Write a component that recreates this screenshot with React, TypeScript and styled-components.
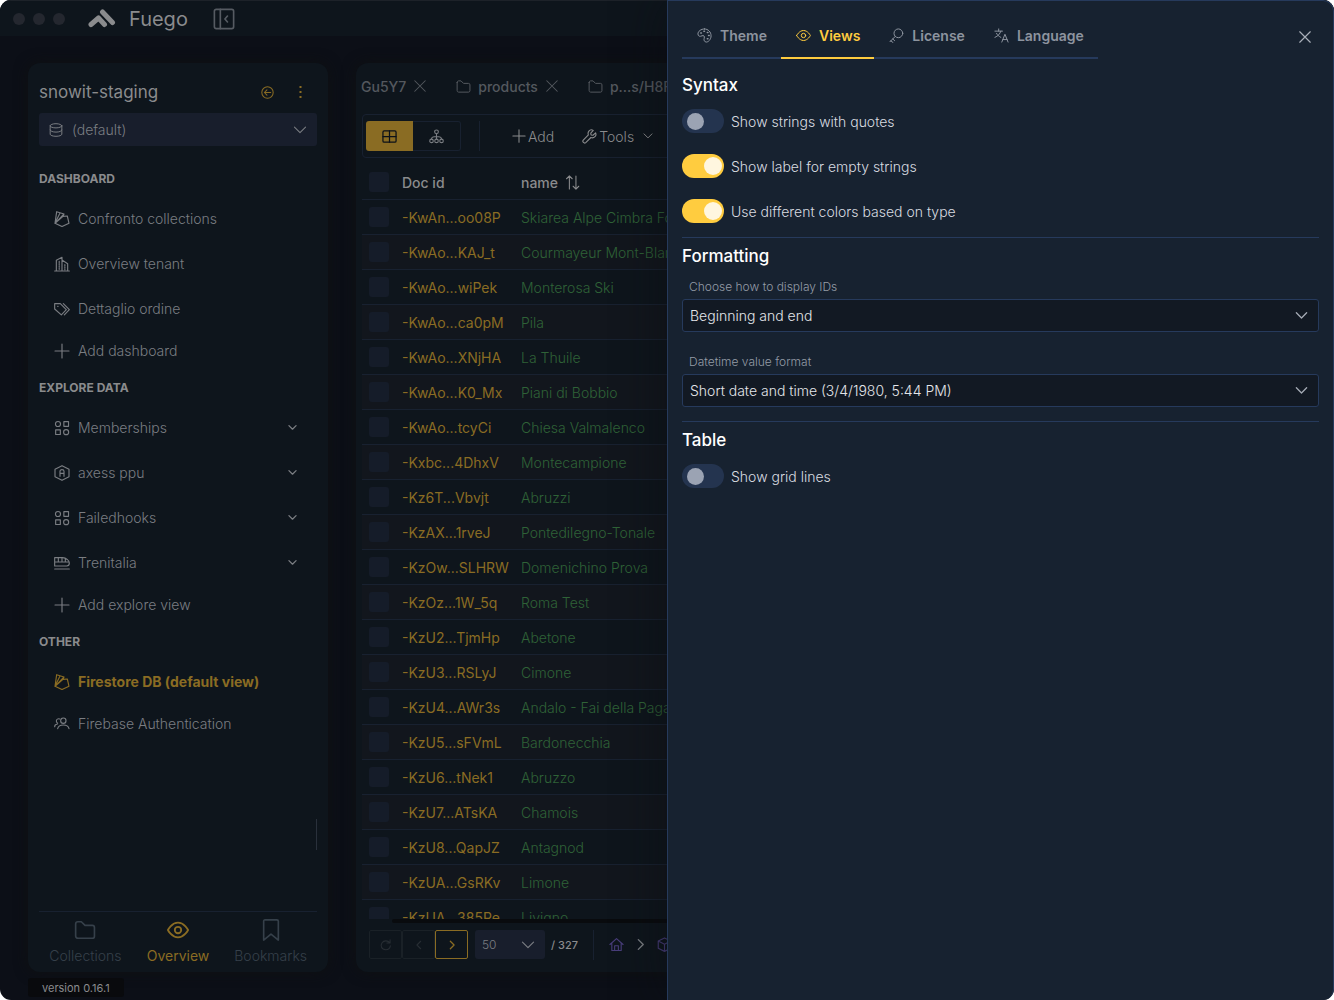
import React from "react";
import styled, { createGlobalStyle } from "styled-components";

const c = {
  body: "#0c0f17",
  card: "#0e151c",
  line: "#182130",
  field: "#181e2c",
  text: "#8a8b8d",
  muted: "#7a7d82",
  faint: "#36404a",
  gold: "#8a6c23",
  green: "#2f6237",
  panel: "#172230",
  panelLine: "#263a5c",
  yellow: "#ffcc3f",
};

const GlobalStyle = createGlobalStyle`
  * { box-sizing: border-box; }
  body { margin: 0; background: #fff; }
  body, button, select, input { font-family: Inter, "Liberation Sans", sans-serif; font-size: 14px; font-weight: 300; }
  button { border: 0; padding: 0; background: none; color: inherit; cursor: pointer; }
  h1, h2, h3, ul { margin: 0; padding: 0; font-weight: 400; }
  svg { display: block; flex: none; }
`;

/* ---------- icons ---------- */

const paths = {
  sidebar: (
    <>
      <rect x="1.5" y="1.5" width="21" height="21" rx="2" />
      <path d="M8 1.5v21M15.8 8.8 13 12l2.8 3.2" />
    </>
  ),
  back: (
    <>
      <circle cx="12" cy="12" r="10.5" />
      <path d="M18 12H6.5M11 7.2 6.2 12l4.8 4.8" />
    </>
  ),
  database: (
    <>
      <ellipse cx="12" cy="4.8" rx="10" ry="3.6" />
      <path d="M2 4.8v14.4c0 2 4.5 3.6 10 3.6s10-1.6 10-3.6V4.8M2 12c0 2 4.5 3.6 10 3.6s10-1.6 10-3.6" />
    </>
  ),
  down: <path d="M2.5 7 12 16.5 21.5 7" />,
  right: <path d="m8 3 9 9-9 9" />,
  left: <path d="m16 3-9 9 9 9" />,
  close: <path d="m3 3 18 18M21 3 3 21" />,
  plus: <path d="M12 1.5v21M1.5 12h21" />,
  firebase: (
    <path d="M4 1 15 4.500 13.500 8 20 7.500 22.500 18.500 12 23.300 1.500 18.500 4 1ZM1.500 18.500 15 4.500M1.500 18.500 9 3M1.500 18.500 13.500 8" />
  ),
  building: (
    <>
      <path d="M1 22.500h22M3.500 22V6.500L12 2v20M12 6l8.500 5.500V22" />
      <path d="M7.800 8v12M16.300 13v8" strokeDasharray="2 1.500" />
    </>
  ),
  tags: (
    <>
      <path d="M1 4h8.500l9 9-7.500 7.800L1 12V4ZM14 4l9 9-7.500 7.800" />
      <path d="M5.500 8h.6" />
    </>
  ),
  shapes: (
    <>
      <circle cx="6" cy="6" r="3.800" />
      <circle cx="18.200" cy="18.200" r="3.800" />
      <path d="M14.800 2.500h7v7h-7zM2.500 14.800h7v7h-7z" />
    </>
  ),
  hexagon: (
    <>
      <path d="m12 1 10.500 5.500v11L12 23 1.500 17.500v-11L12 1Z" />
      <path d="M9 17V9.500C9 8 10 7 12 7s3 1 3 2.500V17M9 12.500h6" />
    </>
  ),
  train: (
    <path d="M1 4h12c5 0 10 4 10 8 0 3-2 4.500-4 4.500H1V4ZM1 10.500h21M1 21h22M6.500 4.500v5.500M12 4.500v5.500M17 5.500v4.500" />
  ),
  people: (
    <>
      <circle cx="14" cy="7" r="4" />
      <path d="M5.500 19c1-4 4-5.500 8.500-5.500s7.500 1.500 8.500 5.500M8.500 4.500c-2.500-1-5 .5-5 3 0 1.500.8 2.600 2 3.200M1 16c0-2 1.500-3.500 4-4" />
    </>
  ),
  folder: (
    <path d="M1.800 5.500c0-1.500 1-2.500 2.500-2.500H8l4 4h8c1.500 0 2.300 1 2.300 2.300v9.400c0 1.500-1 2.300-2.300 2.300H4.300c-1.500 0-2.500-1-2.500-2.500v-13Z" />
  ),
  eye: (
    <>
      <path d="M1 12s4-8 11-8 11 8 11 8-4 8-11 8S1 12 1 12Z" />
      <circle cx="12" cy="12" r="3.500" />
    </>
  ),
  bookmark: <path d="M4 2.500c0-1 .5-1.500 1.500-1.500h13c1 0 1.500.5 1.500 1.500V23l-8-6.500L4 23V2.500Z" />,
  grid: (
    <>
      <rect x="1.500" y="3" width="21" height="18" rx="2" />
      <path d="M12 3v18M1.500 12h21" />
    </>
  ),
  tree: (
    <>
      <circle cx="12" cy="4.500" r="3" />
      <circle cx="4" cy="19" r="2.800" />
      <circle cx="12" cy="19" r="2.800" />
      <circle cx="20" cy="19" r="2.800" />
      <path d="M12 7.500v8.500M4 16c0-3 2-4 8-4s8 1 8 4" />
    </>
  ),
  wrench: (
    <path d="M21.800 6.200 17.500 10 14.500 9.500 14 6.500 18 2.200C15.500.8 12.500 1.500 11 3.500S9.500 7.800 10.200 9.500L2 17.800c-2 2.500 1.500 6 4 4L14.300 13.600c2 .8 4.600.5 6.400-1.300s2-4 1.100-6.100Z" />
  ),
  sort: <path d="M7 22.500V1.500M2.500 6 7 1.500 11.500 6M17.500 1.500v21M13 18l4.500 4.500L22 18" />,
  refresh: <path d="M19 3v5.500h-5.500M19 8.500C15 3.500 8 4 5 8.500S4 20 11.500 20c4.500 0 7.500-3 8-6.500" />,
  home: <path d="M1.500 12 12 2.500 22.500 12M4.500 9.500V21.500h15V9.500M9 21v-7h6v7" />,
  cube: <path d="m12 1.500 10 5v11.500l-10 5-10-5V6.500l10-5ZM2 6.500l10 5 10-5M12 11.500V23" />,
  palette: (
    <>
      <path d="M12 1.500C6 1.500 1.500 5.500 1.500 9.500S5 14 8 12.500s4.500 1 3.500 4S12 22.500 15 22.500s7.500-4 7.500-10-4.500-11-10.500-11Z" />
      <path d="M6 8h1M11 5h1M16.500 7h1M18.500 12h1M16.500 17h1" strokeWidth="2.400" />
    </>
  ),
  key: (
    <>
      <circle cx="15" cy="8.500" r="7" />
      <path d="M10 13.500 1.500 22M3 20.500l3.500 2.800M6 17.500l3 2.800" />
    </>
  ),
  translate: (
    <path d="M7.500 1.500v3.500M1.500 5h12M11 5C9.500 9.500 6.500 13 1.500 15M4 8.500c1.500 3 4 5 7 6.500M12.500 22.500 17.500 10l5 12.500M14.200 18.500h6.600" />
  ),
};

type IconName = keyof typeof paths;

const Icon = ({ name, size = 16, weight = 1.5 }: { name: IconName; size?: number; weight?: number }) => (
  <svg
    width={size}
    height={size}
    viewBox="0 0 24 24"
    fill="none"
    stroke="currentColor"
    strokeWidth={weight}
    strokeLinecap="round"
    strokeLinejoin="round"
    aria-hidden="true"
  >
    {paths[name]}
  </svg>
);

const Logo = () => (
  <svg width="28" height="20" viewBox="0 0 28 20" fill="none" stroke="#8a8b8d" strokeWidth="5" aria-hidden="true">
    <path d="M3 15.500 10.500 9l6 6.500" strokeLinecap="round" strokeLinejoin="round" />
    <path d="m14.500 3 10 10.500" strokeLinecap="round" />
  </svg>
);

/* ---------- window ---------- */

const Window = styled.div`
  position: relative;
  display: flex;
  flex-direction: column;
  height: 100vh;
  overflow: hidden;
  border-radius: 11px;
  background: ${c.body};
  color: ${c.text};
`;

const TitleBar = styled.header`
  display: flex;
  align-items: center;
  height: 36px;
  padding: 0 13px;
  background: ${c.card};
  border-top: 1px solid #1d2229;
`;

const Lights = styled.div`
  display: flex;
  gap: 8px;
  margin-right: 23px;
`;

const Light = styled.span`
  width: 12px;
  height: 12px;
  border-radius: 50%;
  background: #24272f;
`;

const Brand = styled.h1`
  margin: 0 25px 0 13px;
  font-size: 20px;
  line-height: 24px;
`;

const CollapseButton = styled.button`
  color: #565b62;
`;

const Workspace = styled.div`
  flex: 1;
  min-height: 0;
  display: grid;
  grid-template-columns: 300px minmax(0, 1fr);
  gap: 28px;
  padding: 27px 28px 0;
`;

const Card = styled.section`
  display: flex;
  flex-direction: column;
  min-height: 0;
  overflow: hidden;
  border-radius: 12px;
  background: ${c.card};
  box-shadow: 0 0 14px #0f1112;
`;

const StatusBar = styled.footer`
  display: flex;
  padding: 6px 28px 3px;
`;

const Version = styled.span`
  padding: 2px 14px 1px;
  border-radius: 3px;
  background: #090a0d;
  font-size: 11px;
  font-weight: 400;
  line-height: 16px;
`;

/* ---------- sidebar ---------- */

const SidebarCard = styled(Card)`
  padding: 8px 11px 0;
`;

const ProjectRow = styled.div`
  display: flex;
  align-items: center;
  height: 42px;
  padding-right: 10px;
  gap: 20px;
`;

const ProjectName = styled.h2`
  flex: 1;
  font-size: 17px;
`;

const GoldButton = styled.button`
  display: grid;
  place-items: center;
  width: 13px;
  height: 24px;
  color: ${c.gold};
`;

const SelectBox = styled.div<{ $kind: "filled" | "outlined" | "compact" }>`
  display: grid;
  align-items: center;
  height: ${(p) => (p.$kind === "compact" ? 29 : 33)}px;
  width: ${(p) => (p.$kind === "compact" ? "70px" : "auto")};
  border-radius: 3px;
  background: ${(p) => (p.$kind === "outlined" ? "#121923" : c.field)};
  border: ${(p) => (p.$kind === "outlined" ? `1px solid ${c.panelLine}` : "0")};
  color: ${(p) => (p.$kind === "outlined" ? "#a5abb5" : c.muted)};
  > * { grid-area: 1 / 1; }
  > svg { pointer-events: none; margin: 0 10px; }
  > svg:last-child { justify-self: end; }
`;

const Select = styled.select<{ $indent: number; $color: string; $small?: boolean }>`
  appearance: none;
  width: 100%;
  height: 100%;
  border: 0;
  border-radius: 3px;
  padding: 0 32px 0 ${(p) => p.$indent}px;
  background: transparent;
  color: ${(p) => p.$color};
  font-size: ${(p) => (p.$small ? 12 : 14)}px;
`;

const NavBlocks = styled.nav`
  flex: 1;
  min-height: 0;
  padding-top: 15px;
  overflow: hidden;
`;

const NavHeading = styled.h3`
  font-size: 12px;
  font-weight: 700;
  line-height: 35px;
  text-transform: uppercase;
`;

const NavItem = styled.button<{ $short?: boolean; $active?: boolean }>`
  display: grid;
  grid-template-columns: 16px 1fr 10px;
  gap: 8px;
  align-items: center;
  width: 100%;
  height: ${(p) => (p.$short ? 39 : 45)}px;
  padding: 0 19px 0 15px;
  text-align: left;
  color: ${(p) => (p.$active ? c.gold : c.muted)};
  font-weight: ${(p) => (p.$active ? 700 : 300)};
`;

const ResizeRow = styled.div`
  display: flex;
  justify-content: flex-end;
  padding-bottom: 61px;
`;

const ResizeHandle = styled.span`
  width: 1px;
  height: 31px;
  background: #29303b;
`;

const BottomNav = styled.nav`
  display: grid;
  grid-template-columns: repeat(3, 1fr);
  height: 61px;
  border-top: 1px solid ${c.line};
`;

const BottomTab = styled.button<{ $active?: boolean }>`
  display: flex;
  flex-direction: column;
  align-items: center;
  gap: 6px;
  padding-top: 7px;
  line-height: 18px;
  font-weight: ${(p) => (p.$active ? 400 : 300)};
  color: ${(p) => (p.$active ? c.gold : c.faint)};
`;

/* ---------- collection view ---------- */

const TabStrip = styled.div`
  display: flex;
  align-items: center;
  gap: 29px;
  height: 46px;
  padding-left: 5px;
  color: #54585e;
  font-weight: 500;
  white-space: nowrap;
`;

const OpenTab = styled.div`
  display: flex;
  align-items: center;
  gap: 7px;
`;

const Toolbar = styled.div`
  display: flex;
  align-items: center;
  height: 44px;
  margin: 5px 6px 7px;
  padding-left: 3px;
  border: 1px solid ${c.line};
  border-radius: 4px;
`;

const ViewButton = styled.button<{ $active?: boolean }>`
  display: grid;
  place-items: center;
  width: ${(p) => (p.$active ? 47 : 48)}px;
  height: 30px;
  border: ${(p) => (p.$active ? "0" : `1px solid ${c.line}`)};
  border-left: 0;
  border-radius: ${(p) => (p.$active ? "3px 0 0 3px" : "0 3px 3px 0")};
  background: ${(p) => (p.$active ? c.gold : "transparent")};
  color: ${(p) => (p.$active ? "#0c1118" : c.muted)};
`;

const Rule = styled.span<{ $space: number }>`
  width: 1px;
  height: 30px;
  margin: 0 ${(p) => p.$space}px;
  background: ${c.line};
`;

const Tools = styled.div`
  display: flex;
  gap: 28px;
  padding-left: 14px;
`;

const ToolButton = styled.button`
  display: flex;
  align-items: center;
  gap: 2px;
  color: ${c.text};
  > svg:nth-child(2) { margin-left: 7px; }
`;

const TableClip = styled.div`
  flex: 1;
  min-height: 0;
  margin-left: 6px;
  overflow: hidden;
`;

const Table = styled.table`
  width: 100%;
  table-layout: fixed;
  border-collapse: separate;
  border-spacing: 0;
  white-space: nowrap;
  th, td {
    height: 35px;
    padding: 0;
    border-bottom: 1px solid ${c.line};
    text-align: left;
  }
  th { font-weight: 500; }
  tbody tr:nth-child(even) { background: #12161d; }
`;

const Col = styled.col<{ $w?: number }>`
  width: ${(p) => (p.$w ? `${p.$w}px` : "auto")};
`;

const Check = styled.input`
  appearance: none;
  display: block;
  width: 20px;
  height: 20px;
  margin: 0 7px;
  border-radius: 3px;
  background: #151c29;
`;

const IdCell = styled.td`
  color: ${c.gold};
  font-weight: 400;
`;

const NameCell = styled.td`
  color: ${c.green};
`;

const SortHeader = styled.span`
  display: flex;
  align-items: center;
  gap: 7px;
`;

const ScrollTrack = styled.div`
  height: 4px;
  margin-left: 36px;
  border-radius: 2px;
  background: #090b0e;
`;

const Pager = styled.div`
  display: flex;
  align-items: center;
  height: 29px;
  margin: 7px 13px 13px;
`;

const PageButton = styled.button<{ $active?: boolean }>`
  display: grid;
  place-items: center;
  width: 33px;
  height: 29px;
  border: 1px solid ${(p) => (p.$active ? c.gold : "#1a2127")};
  color: ${(p) => (p.$active ? c.gold : "#272d33")};
  border-radius: 2px;
`;

const PageSize = styled.div`
  margin: 0 6px 0 7px;
`;

const Total = styled.span`
  font-size: 11px;
  font-weight: 500;
`;

const Crumb = styled.button<{ $muted?: boolean }>`
  margin-right: 10px;
  color: ${(p) => (p.$muted ? c.muted : "#483d7a")};
`;

/* ---------- settings drawer ---------- */

const Drawer = styled.aside`
  position: absolute;
  inset: 0 0 0 auto;
  width: 50%;
  padding: 14px;
  border: 1px solid ${c.panelLine};
  border-bottom: 0;
  border-radius: 0 11px 11px 0;
  background: ${c.panel};
  color: #d9dce0;
  box-shadow: 0 0 50px rgba(12, 13, 16, 0.6);
`;

const DrawerHead = styled.div`
  display: flex;
  align-items: flex-start;
  justify-content: space-between;
  margin-bottom: 8px;
`;

const DrawerTabs = styled.div`
  display: flex;
`;

const DrawerTab = styled.button<{ $active?: boolean }>`
  display: flex;
  align-items: center;
  gap: 8px;
  height: 44px;
  padding: 0 14px 2px 15px;
  border-bottom: 2px solid ${(p) => (p.$active ? c.yellow : c.panelLine)};
  color: ${(p) => (p.$active ? c.yellow : "#8d949f")};
  font-weight: 600;
`;

const CloseButton = styled.button`
  display: grid;
  place-items: center;
  width: 28px;
  height: 44px;
  color: #a9afb8;
`;

const Group = styled.section`
  padding-bottom: 14px;
  & + & { border-top: 1px solid ${c.panelLine}; }
`;

const GroupTitle = styled.h2`
  padding: 6px 0 1px;
  color: #fff;
  font-size: 17px;
  font-weight: 500;
  line-height: 24px;
`;

const Switches = styled.div`
  display: flex;
  flex-direction: column;
  gap: 21px;
  padding-top: 11px;
`;

const SwitchRow = styled.label`
  display: flex;
  align-items: center;
  gap: 7px;
`;

const Switch = styled.input`
  appearance: none;
  display: flex;
  align-items: center;
  width: 42px;
  height: 24px;
  margin: 0;
  padding: 0 5px;
  border-radius: 12px;
  background: #24344f;
  &::before {
    content: "";
    width: 17px;
    height: 17px;
    border-radius: 50%;
    background: #9ba3b3;
  }
  &:checked {
    justify-content: flex-end;
    padding-right: 2px;
    background: ${c.yellow};
  }
  &:checked::before { background: #fff6df; width: 18px; height: 18px; }
`;

const Fields = styled.div`
  display: flex;
  flex-direction: column;
  gap: 21px;
  padding-top: 9px;
`;

const FieldLabel = styled.label`
  display: block;
  padding: 0 7px;
  color: #949ba6;
  font-size: 12px;
  line-height: 18px;
  margin-bottom: 3px;
`;

/* ---------- data ---------- */

const rows = [
  ["-KwAn...oo08P", "Skiarea Alpe Cimbra Folgaria"],
  ["-KwAo...KAJ_t", "Courmayeur Mont-Blanc"],
  ["-KwAo...wiPek", "Monterosa Ski"],
  ["-KwAo...ca0pM", "Pila"],
  ["-KwAo...XNjHA", "La Thuile"],
  ["-KwAo...K0_Mx", "Piani di Bobbio"],
  ["-KwAo...tcyCi", "Chiesa Valmalenco"],
  ["-Kxbc...4DhxV", "Montecampione"],
  ["-Kz6T...Vbvjt", "Abruzzi"],
  ["-KzAX...1rveJ", "Pontedilegno-Tonale"],
  ["-KzOw...SLHRW", "Domenichino Prova"],
  ["-KzOz...1W_5q", "Roma Test"],
  ["-KzU2...TjmHp", "Abetone"],
  ["-KzU3...RSLyJ", "Cimone"],
  ["-KzU4...AWr3s", "Andalo - Fai della Paganella"],
  ["-KzU5...sFVmL", "Bardonecchia"],
  ["-KzU6...tNek1", "Abruzzo"],
  ["-KzU7...ATsKA", "Chamois"],
  ["-KzU8...QapJZ", "Antagnod"],
  ["-KzUA...GsRKv", "Limone"],
  ["-KzUA...385Re", "Livigno"],
];

type Item = { label: string; icon: IconName; short?: boolean; active?: boolean; expands?: boolean };

const nav: { title: string; items: Item[] }[] = [
  {
    title: "Dashboard",
    items: [
      { label: "Confronto collections", icon: "firebase" },
      { label: "Overview tenant", icon: "building" },
      { label: "Dettaglio ordine", icon: "tags" },
      { label: "Add dashboard", icon: "plus", short: true },
    ],
  },
  {
    title: "Explore data",
    items: [
      { label: "Memberships", icon: "shapes", expands: true },
      { label: "axess ppu", icon: "hexagon", expands: true },
      { label: "Failedhooks", icon: "shapes", expands: true },
      { label: "Trenitalia", icon: "train", expands: true },
      { label: "Add explore view", icon: "plus", short: true },
    ],
  },
  {
    title: "Other",
    items: [
      { label: "Firestore DB (default view)", icon: "firebase", active: true },
      { label: "Firebase Authentication", icon: "people", short: true },
    ],
  },
];

const drawerTabs: { label: string; icon: IconName }[] = [
  { label: "Theme", icon: "palette" },
  { label: "Views", icon: "eye" },
  { label: "License", icon: "key" },
  { label: "Language", icon: "translate" },
];

/* ---------- views ---------- */

const Toggle = ({ label, on }: { label: string; on?: boolean }) => (
  <SwitchRow>
    <Switch type="checkbox" role="switch" defaultChecked={on} />
    {label}
  </SwitchRow>
);

const SelectField = ({ id, label, value }: { id: string; label: string; value: string }) => (
  <div>
    <FieldLabel htmlFor={id}>{label}</FieldLabel>
    <SelectBox $kind="outlined">
      <Select id={id} $indent={7} $color="#e4e6ea">
        <option>{value}</option>
      </Select>
      <Icon name="down" size={13} weight={2.4} />
    </SelectBox>
  </div>
);

const Sidebar = () => (
  <SidebarCard>
    <ProjectRow>
      <ProjectName>snowit-staging</ProjectName>
      <GoldButton aria-label="Back">
        <Icon name="back" size={13} weight={1.9} />
      </GoldButton>
      <GoldButton aria-label="Project menu">
        <svg width="3" height="13" viewBox="0 0 3 13" fill="currentColor" aria-hidden="true">
          <rect width="2" height="2" x=".5" y="0" />
          <rect width="2" height="2" x=".5" y="5" />
          <rect width="2" height="2" x=".5" y="10" />
        </svg>
      </GoldButton>
    </ProjectRow>
    <SelectBox $kind="filled">
      <Icon name="database" size={14} weight={1.7} />
      <Select aria-label="Database" $indent={33} $color={c.muted}>
        <option>(default)</option>
      </Select>
      <Icon name="down" size={14} weight={1.8} />
    </SelectBox>
    <NavBlocks>
      {nav.map((block) => (
        <section key={block.title}>
          <NavHeading>{block.title}</NavHeading>
          {block.items.map((item) => (
            <NavItem key={item.label} $short={item.short} $active={item.active}>
              <Icon name={item.icon} size={16} weight={1.7} />
              {item.label}
              {item.expands && <Icon name="down" size={9} weight={3.4} />}
            </NavItem>
          ))}
        </section>
      ))}
    </NavBlocks>
    <ResizeRow>
      <ResizeHandle />
    </ResizeRow>
    <BottomNav>
      <BottomTab>
        <Icon name="folder" size={22} weight={1.8} />
        Collections
      </BottomTab>
      <BottomTab $active>
        <Icon name="eye" size={22} weight={2} />
        Overview
      </BottomTab>
      <BottomTab>
        <Icon name="bookmark" size={22} weight={1.8} />
        Bookmarks
      </BottomTab>
    </BottomNav>
  </SidebarCard>
);

const CollectionView = () => (
  <Card>
    <TabStrip>
      <OpenTab>
        Gu5Y7
        <Icon name="close" size={14} weight={1.8} />
      </OpenTab>
      <OpenTab>
        <Icon name="folder" size={15} weight={1.6} />
        products
        <Icon name="close" size={14} weight={1.8} />
      </OpenTab>
      <OpenTab>
        <Icon name="folder" size={15} weight={1.6} />
        p...s/H8Fq
      </OpenTab>
    </TabStrip>
    <Toolbar>
      <ViewButton $active aria-label="Table view">
        <Icon name="grid" size={15} weight={2} />
      </ViewButton>
      <ViewButton aria-label="Tree view">
        <Icon name="tree" size={15} weight={1.8} />
      </ViewButton>
      <Rule $space={18} />
      <Tools>
        <ToolButton>
          <Icon name="plus" size={14} weight={1.8} />
          Add
        </ToolButton>
        <ToolButton>
          <Icon name="wrench" size={15} weight={1.8} />
          Tools
          <Icon name="down" size={10} weight={2.4} />
        </ToolButton>
      </Tools>
    </Toolbar>
    <TableClip>
      <Table>
        <colgroup>
          <Col $w={40} />
          <Col $w={119} />
          <Col />
        </colgroup>
        <thead>
          <tr>
            <th>
              <Check type="checkbox" aria-label="Select all" />
            </th>
            <th>Doc id</th>
            <th>
              <SortHeader>
                name
                <Icon name="sort" size={15} weight={1.7} />
              </SortHeader>
            </th>
          </tr>
        </thead>
        <tbody>
          {rows.map(([id, name]) => (
            <tr key={id}>
              <td>
                <Check type="checkbox" aria-label={id} />
              </td>
              <IdCell>{id}</IdCell>
              <NameCell>{name}</NameCell>
            </tr>
          ))}
        </tbody>
      </Table>
    </TableClip>
    <ScrollTrack />
    <Pager>
      <PageButton aria-label="Reload">
        <Icon name="refresh" size={14} weight={1.8} />
      </PageButton>
      <PageButton aria-label="Previous page">
        <Icon name="left" size={10} weight={2.6} />
      </PageButton>
      <PageButton $active aria-label="Next page">
        <Icon name="right" size={10} weight={3} />
      </PageButton>
      <PageSize>
        <SelectBox $kind="compact">
          <Select aria-label="Page size" $indent={7} $color={c.muted} $small>
            <option>50</option>
          </Select>
          <Icon name="down" size={14} weight={2} />
        </SelectBox>
      </PageSize>
      <Total>/ 327</Total>
      <Rule $space={15} />
      <Crumb aria-label="Home">
        <Icon name="home" size={15} weight={1.8} />
      </Crumb>
      <Crumb $muted aria-label="Expand path">
        <Icon name="right" size={13} weight={2.6} />
      </Crumb>
      <Crumb aria-label="Collection">
        <Icon name="cube" size={15} weight={1.8} />
      </Crumb>
    </Pager>
  </Card>
);

const SettingsDrawer = () => (
  <Drawer>
    <DrawerHead>
      <DrawerTabs role="tablist">
        {drawerTabs.map((tab) => (
          <DrawerTab key={tab.label} role="tab" aria-selected={tab.label === "Views"} $active={tab.label === "Views"}>
            <Icon name={tab.icon} size={15} weight={1.6} />
            {tab.label}
          </DrawerTab>
        ))}
      </DrawerTabs>
      <CloseButton aria-label="Close">
        <Icon name="close" size={14} weight={2} />
      </CloseButton>
    </DrawerHead>
    <Group>
      <GroupTitle>Syntax</GroupTitle>
      <Switches>
        <Toggle label="Show strings with quotes" />
        <Toggle label="Show label for empty strings" on />
        <Toggle label="Use different colors based on type" on />
      </Switches>
    </Group>
    <Group>
      <GroupTitle>Formatting</GroupTitle>
      <Fields>
        <SelectField id="ids" label="Choose how to display IDs" value="Beginning and end" />
        <SelectField id="datetime" label="Datetime value format" value="Short date and time (3/4/1980, 5:44 PM)" />
      </Fields>
    </Group>
    <Group>
      <GroupTitle>Table</GroupTitle>
      <Switches>
        <Toggle label="Show grid lines" />
      </Switches>
    </Group>
  </Drawer>
);

export default function App() {
  return (
    <>
      <GlobalStyle />
      <Window>
        <TitleBar>
          <Lights>
            <Light />
            <Light />
            <Light />
          </Lights>
          <Logo />
          <Brand>Fuego</Brand>
          <CollapseButton aria-label="Collapse sidebar">
            <Icon name="sidebar" size={22} weight={1.8} />
          </CollapseButton>
        </TitleBar>
        <Workspace>
          <Sidebar />
          <CollectionView />
        </Workspace>
        <StatusBar>
          <Version>version 0.16.1</Version>
        </StatusBar>
        <SettingsDrawer />
      </Window>
    </>
  );
}
